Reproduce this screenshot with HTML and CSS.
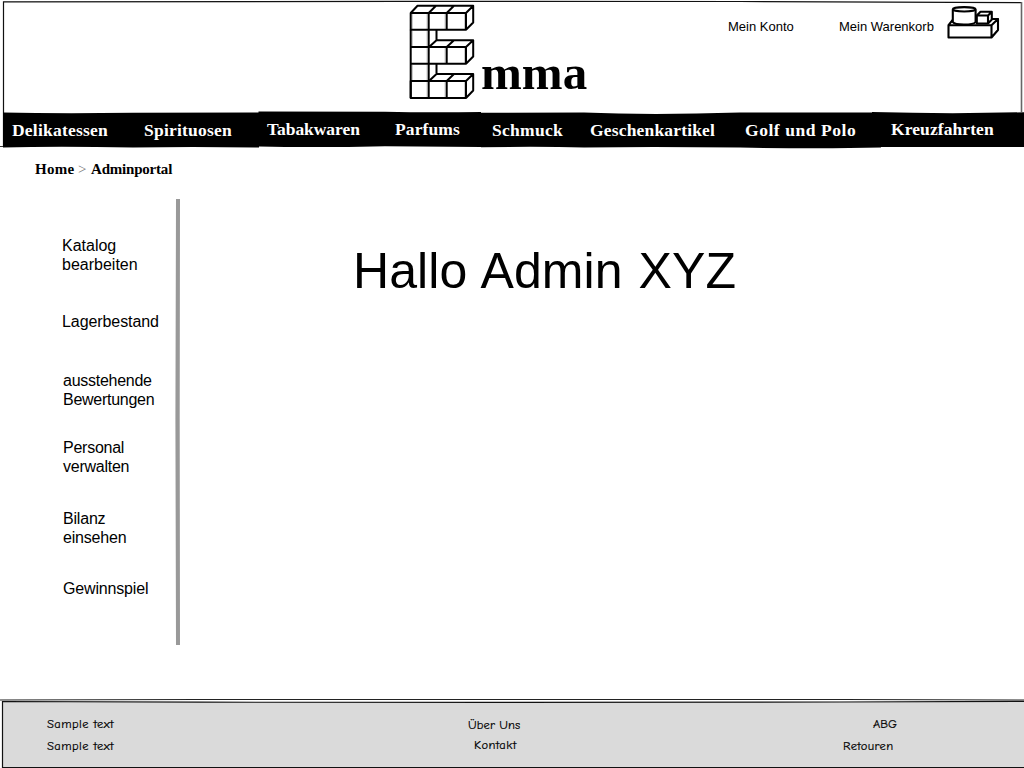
FILE: index.html
```html
<!DOCTYPE html>
<html lang="de">
<head>
<meta charset="utf-8">
<title>Emma – Adminportal</title>
<link rel="stylesheet" href="styles.css">
</head>
<body>
<div class="page">
  <header class="header">
    <svg class="frame" width="1024" height="148" viewBox="0 0 1024 148">
      <path d="M3.5 147V1.8L400 1.4L740 1.5L1021.5 2.6" fill="none" stroke="#111" stroke-width="1.2"/>
      <path d="M1021.5 2V112" stroke="#666" stroke-width="1.6"/>
      <path d="M0 146.5H4" stroke="#333"/>
    </svg>
    <a class="brand" href="#">
      <svg class="logo" width="68" height="98" viewBox="408 3 68 98" fill="none">
        <g stroke="#ccc" stroke-width="1">
          <path d="M412.5 14V29M427 14V29M445 14V29M464.5 14V29M427 31V46M412.5 31V46M427 48V63M445 48V63M464.5 48V63M427 65V80M412.5 65V80M427 82V97M445 82V97M464.5 82V97"/>
        </g>
        <g stroke="#000" stroke-width="2" stroke-linejoin="round">
          <path d="M410.7 13H466V29.8H410.7ZM410.7 13L417.5 5.8H473.2L466 13M473.2 5.8V22.5L466 29.8M428.7 13L436 5.8M446.7 13L454 5.8"/>
          <path d="M410.7 29.8V98M428.7 13V98M410.7 47H466V63.7H410.7M446.7 13V29.8M446.7 47V63.7M436.5 30V40.3M429 47L436.5 40.3H473.2L466 47M473.2 40.3V56.5L466 63.7M446.7 47L454 40.3"/>
          <path d="M410.7 81H466V98H410.7ZM446.7 81V98M436.5 64V74M429 81L436.5 74H473.2L466 81M473.2 74V90.5L466 98M446.7 81L454 74"/>
        </g>
      </svg>
      <span class="name">mma</span>
    </a>
    <div class="account">
      <a class="konto" href="#">Mein Konto</a>
      <a class="korb" href="#">Mein Warenkorb</a>
      <svg class="basket" width="54" height="36" viewBox="946 4 54 36" fill="#fff" stroke="#000" stroke-width="2.1" stroke-linejoin="round">
        <path d="M948.5 25.2L953.5 19H998L991.5 25.2ZM991.5 25.2L998 19V30L991.5 37.5ZM948.5 25.2H991.5V37.5H948.5Z"/>
        <path d="M976.8 15.5L980.5 11.8H991.8L988 15.5ZM988 15.5L991.8 12V19.5L988 23.5ZM976.8 15.5H988V23.5H976.8Z"/>
        <path d="M952.8 9.5V22Q954 24.5 964 24.5Q974 24.5 975.6 22V9.5"/>
        <ellipse cx="964.2" cy="9.3" rx="11.4" ry="2.2"/>
      </svg>
    </div>
  </header>
  <nav class="nav">
    <svg class="nav-bg" width="1024" height="38" viewBox="0 111 1024 38">
      <path d="M3 112.6Q60 113.6 133 112.8L258.5 112.4V111.6L385 111.8Q430 112.8 481 112V112.7L584 112.6Q650 115.2 740 112.6L872 112.6V112Q950 114.2 1024 112.2V147H881V147.6Q820 149 740 147.6Q660 146.4 584 147.4Q540 146.4 481 147.2V147L385 146.2Q320 147.8 259 146.6V147.5Q190 146.4 133 147.5Q60 146 3 147.4Z"/>
    </svg>
    <a class="t1" href="#">Delikatessen</a>
    <a class="t2" href="#">Spirituosen</a>
    <a class="t3 up" href="#">Tabakwaren</a>
    <a class="t4 up" href="#">Parfums</a>
    <a class="t5" href="#">Schmuck</a>
    <a class="t6" href="#">Geschenkartikel</a>
    <a class="t7" href="#">Golf und Polo</a>
    <a class="t8 up" href="#">Kreuzfahrten</a>
  </nav>
  <div class="crumbs"><b class="home">Home</b><span class="sep">&gt;</span><b class="here">Adminportal</b></div>
  <div class="content">
    <aside class="side">
      <a class="s1" href="#">Katalog<br>bearbeiten</a>
      <a class="s2" href="#">Lagerbestand</a>
      <a class="s3" href="#">ausstehende<br>Bewertungen</a>
      <a class="s4" href="#">Personal<br>verwalten</a>
      <a class="s5" href="#">Bilanz<br>einsehen</a>
      <a class="s6" href="#">Gewinnspiel</a>
    </aside>
    <svg class="divider" width="6" height="447" viewBox="0 0 6 447"><path d="M1 0H5L4.7 220L5 446H1L.4 220Z" fill="#999"/></svg>
    <main class="main"><h1>Hallo Admin XYZ</h1></main>
  </div>
  <footer class="footer">
    <svg class="footer-bg" width="1024" height="70" viewBox="0 698 1024 70">
      <path d="M2.5 702L500 702.4L1024 701.4V767.4H2.5Z" fill="#dadada"/>
      <path d="M0 700L200 699.5H840L1024 700" fill="none" stroke="#222" stroke-width="1.1"/>
      <path d="M1024 701.4L840 702L500 702.4L200 702.2L2.5 701.5V767.5H1024" fill="none" stroke="#111" stroke-width="1.2"/>
    </svg>
    <div class="f1"><a href="#">Sample text</a><a href="#">Sample text</a></div>
    <div class="f2"><a class="uns" href="#">Über Uns</a><a class="kontakt" href="#">Kontakt</a></div>
    <div class="f3"><a class="abg" href="#">ABG</a><a class="ret" href="#">Retouren</a></div>
  </footer>
</div>
</body>
</html>
```
FILE: styles.css
```css
* { box-sizing: border-box; }
body { margin: 0; background: #fff; color: #000; overflow: hidden; }
a { color: inherit; text-decoration: none; white-space: nowrap; }
svg { display: block; flex: none; }
.page {
  width: 1024px; height: 768px; display: grid;
  grid-template-rows: 111px 38px 50px 499px 70px;
  font-family: "Liberation Sans", Arial, sans-serif;
}
.header { position: relative; display: flex; padding-left: 408px; }
.frame, .nav-bg, .footer-bg { position: absolute; left: 0; top: 0; }
.brand { position: relative; display: flex; width: 320px; padding-top: 3px; }
.name {
  padding: 43px 0 0 5px;
  font: bold 49px/54px "Liberation Serif", "Times New Roman", serif;
}
.account { position: relative; display: flex; font-size: 13px; line-height: 16px; padding-top: 4px; }
.konto { width: 111px; padding-top: 15px; }
.korb { width: 95px; height: 34px; padding-top: 15px; overflow: hidden; }
.basket { margin-left: 12px; }

.nav {
  position: relative; display: flex; padding: 8px 0 0 12px; color: #fff;
  font: bold 17.5px/22px "Liberation Serif", "Times New Roman", serif;
}
.nav a { position: relative; letter-spacing: .22px; }
.nav .up { margin-top: -1px; }
.nav .t1 { width: 132px; }
.nav .t2 { width: 123px; }
.nav .t3 { width: 128px; letter-spacing: -.05px; }
.nav .t4 { width: 97px; letter-spacing: .1px; }
.nav .t5 { width: 98px; letter-spacing: .28px; }
.nav .t6 { width: 155px; letter-spacing: .17px; }
.nav .t7 { width: 146px; letter-spacing: .55px; }
.nav .t8 { letter-spacing: .08px; }

.crumbs {
  display: flex; padding: 12px 0 0 35px;
  font: 15px/17px "Liberation Serif", "Times New Roman", serif;
}
.home { width: 43px; letter-spacing: .3px; }
.sep { width: 13px; color: #777; }
.here { letter-spacing: -.2px; }

.content { display: flex; }
.side { width: 175px; padding: 37px 0 0 62px; display: flex; flex-direction: column; font-size: 16px; line-height: 19px; }
.s2 { margin-top: 38px; letter-spacing: -.08px; }
.s3 { margin: 40px 0 0 1px; letter-spacing: -.27px; }
.s4 { margin: 29px 0 0 1px; letter-spacing: -.25px; }
.s5 { margin: 33px 0 0 1px; letter-spacing: -.2px; }
.s6 { margin: 32px 0 0 1px; letter-spacing: -.17px; }
.main { padding: 43px 0 0 172px; }
.main h1 { margin: 0; font-size: 50px; font-weight: 400; line-height: 58px; white-space: nowrap; letter-spacing: .1px; word-spacing: 1.8px; }

.footer {
  position: relative; display: flex; padding-top: 15px;
  font: 12.5px/22px "Comic Sans MS", "Comic Neue", "Open Sans", sans-serif;
  -webkit-text-stroke: .2px #000;
}
.footer div { position: relative; display: flex; flex-direction: column; }
.f1 { width: 421px; margin-left: 47px; letter-spacing: .42px; }
.f2 { width: 375px; line-height: 20px; padding-top: 2px; letter-spacing: .1px; }
.kontakt { padding-left: 6px; letter-spacing: .4px; }
.abg { padding-left: 30px; letter-spacing: 0; }
.ret { letter-spacing: .35px; }
```
